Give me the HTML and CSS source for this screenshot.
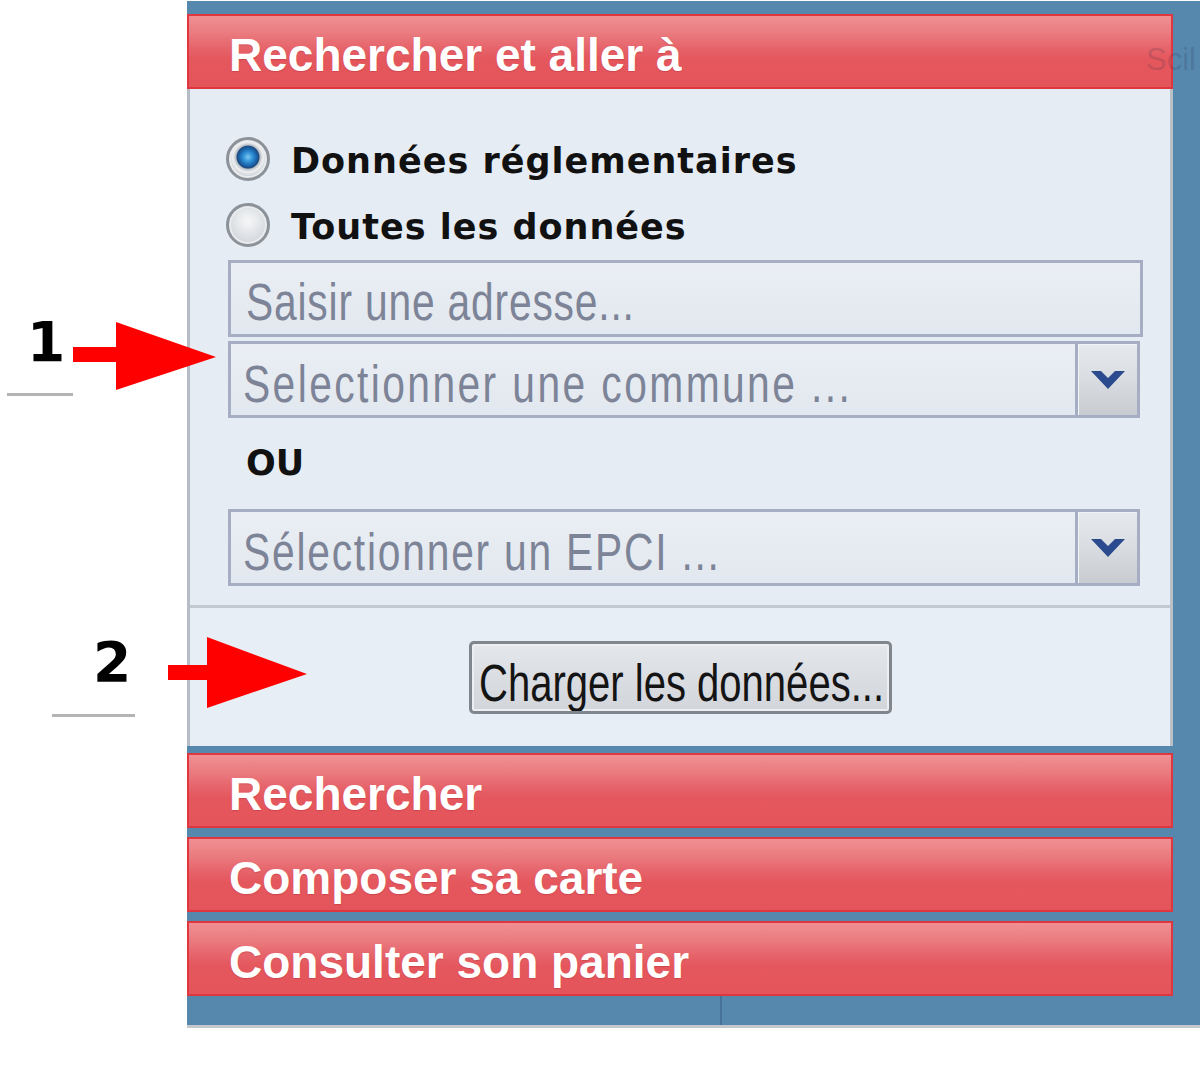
FILE: index.html
```html
<!DOCTYPE html>
<html lang="fr">
<head>
  <meta charset="UTF-8">
  <meta name="viewport" content="width=device-width, initial-scale=1.0">
  <title>Rechercher et aller à</title>
  <link rel="stylesheet" href="styles.css">
</head>
<body>
  <div class="page">
    <div class="frame">
      <div class="bar">Rechercher et aller à</div>

      <div class="panel">
        <div class="fieldset">
          <label class="radio-row">
            <span class="radio checked"></span>
            <span class="radio-label">Données réglementaires</span>
          </label>
          <label class="radio-row">
            <span class="radio"></span>
            <span class="radio-label">Toutes les données</span>
          </label>

          <div class="field">
            <span class="hint">Saisir une adresse...</span>
          </div>

          <div class="combo">
            <div class="combo-text"><span class="hint wide">Selectionner une commune ...</span></div>
            <span class="combo-btn">
              <svg width="34" height="22" viewBox="0 0 34 22"><path d="M0 2H10L17 9L24 2H34L17 20Z" fill="#2c4b8e"/></svg>
            </span>
          </div>

          <div class="or">OU</div>

          <div class="combo">
            <div class="combo-text"><span class="hint spaced">Sélectionner un EPCI ...</span></div>
            <span class="combo-btn">
              <svg width="34" height="22" viewBox="0 0 34 22"><path d="M0 2H10L17 9L24 2H34L17 20Z" fill="#2c4b8e"/></svg>
            </span>
          </div>
        </div>

        <div class="actions">
          <button class="load-btn" type="button"><span class="btn-text">Charger les données...</span></button>
        </div>
      </div>

      <div class="bars">
        <div class="bar">Rechercher</div>
        <div class="bar">Composer sa carte</div>
        <div class="bar">Consulter son panier</div>
      </div>

      <div class="frame-foot"><div class="foot-split"></div></div>
    </div>

    <span class="ghost">Scil</span>

    <div class="note note-1">1</div>
    <div class="note-rule rule-1"></div>
    <div class="note note-2">2</div>
    <div class="note-rule rule-2"></div>

    <svg class="arrows" width="320" height="720" viewBox="0 0 320 720">
      <path d="M73 347H116V322L216 357L116 390V362H73Z" fill="#ff0000"/>
      <path d="M168 665H207V637L307 674L207 708V680H168Z" fill="#ff0000"/>
    </svg>
  </div>
</body>
</html>
```

FILE: styles.css
```css
body {
  margin: 0;
  background: #fff;
  font-family: 'Liberation Sans', Arial, sans-serif;
}

.page {
  position: relative;
  width: 1200px;
  height: 1083px;
  overflow: hidden;
}

.frame {
  margin-left: 187px;
  width: 1013px;
  box-sizing: border-box;
  padding: 13px 27px 0 0;
  background: #5687ad;
  border-top: 1px solid #fff;
  border-bottom: 3px solid #c4c8cc;
}

.bar {
  height: 75px;
  box-sizing: border-box;
  border: 2px solid #e0373f;
  padding: 7px 0 0 40px;
  line-height: 64px;
  background: linear-gradient(to bottom, #ef9094 0%, #ea7b7f 24%, #e6636a 46%, #e4575d 60%, #e4555b 100%);
  color: #fff;
  font-size: 46px;
  font-weight: bold;
  white-space: nowrap;
  text-shadow: 0 1px 1px rgba(170, 40, 50, 0.35);
}

.panel {
  height: 657px;
  box-sizing: border-box;
  background: #e6ecf3;
  border-left: 3px solid #b5bcc5;
  border-right: 3px solid #b9c0c8;
}

.fieldset {
  height: 519px;
  box-sizing: border-box;
  padding: 48px 0 19px 38px;
  border-bottom: 3px solid #c3c9d1;
}

.radio-row {
  display: flex;
  align-items: center;
  height: 44px;
  margin-left: -2px;
  margin-bottom: 22px;
}

.radio-row + .radio-row {
  margin-bottom: 13px;
}

.radio {
  width: 44px;
  height: 44px;
  box-sizing: border-box;
  border-radius: 50%;
  border: 3px solid #8c9299;
  background: radial-gradient(circle at 50% 40%, #f6f7f8 0%, #e1e4e7 45%, #c6cacf 100%);
  box-shadow: inset 0 0 0 2px #e9ebed;
  flex: none;
}

.radio.checked {
  background: radial-gradient(circle at 50% 45%, #7cc8f2 0, #2f8fd4 5px, #1d6cb3 8px, #1b4a80 11px, #b8bec5 12px, #eef0f2 15px, #d4d7db 18px, #c2c6cb 100%);
}

.radio-label {
  margin-left: 21px;
  padding-top: 4px;
  font-family: 'DejaVu Sans', Verdana, sans-serif;
  font-weight: bold;
  font-size: 35px;
  letter-spacing: 1px;
  color: #111;
  white-space: nowrap;
}

.field,
.combo {
  height: 77px;
  box-sizing: border-box;
  border: 3px solid #a6aec3;
  background: linear-gradient(to bottom, #ebeff4 0%, #e7ecf2 40%, #e2e8ef 100%);
  overflow: hidden;
}

.field {
  width: 915px;
  padding: 11px 0 0 15px;
}

.combo {
  display: flex;
  width: 912px;
  margin-top: 4px;
}

.combo-text {
  flex: 1;
  min-width: 0;
  overflow: hidden;
  padding: 12px 0 0 12px;
}

.hint {
  display: inline-block;
  font-size: 51px;
  line-height: 57px;
  letter-spacing: 1px;
  color: #7d8497;
  white-space: nowrap;
  transform: scaleX(0.8);
  transform-origin: left center;
}

.hint.spaced {
  letter-spacing: 2.2px;
}

.hint.wide {
  letter-spacing: 3px;
}

.combo-btn {
  width: 62px;
  flex: none;
  box-sizing: border-box;
  border-left: 3px solid #a6aec3;
  background: linear-gradient(to bottom, #e6e9ed 0%, #d9dde1 50%, #c8ccd1 100%);
  box-shadow: inset 1px 1px 0 #f2f4f6;
  display: flex;
  align-items: center;
  justify-content: center;
}

.or {
  height: 91px;
  line-height: 91px;
  padding-left: 18px;
  font-family: 'DejaVu Sans', Verdana, sans-serif;
  font-weight: bold;
  font-size: 35px;
  color: #111;
}

.or + .combo {
  margin-top: 0;
}

.actions {
  display: flex;
  justify-content: center;
  padding-top: 33px;
  background: #e8eef5;
  height: 135px;
  box-sizing: border-box;
}

.load-btn {
  width: 423px;
  height: 73px;
  box-sizing: border-box;
  border: 3px solid #80868d;
  border-radius: 5px;
  background: linear-gradient(to bottom, #e4e7eb 0%, #dadde2 50%, #d2d6db 100%);
  box-shadow: inset 0 0 0 2px #eceef1;
  padding: 12px 0 0 7px;
  text-align: left;
  overflow: hidden;
  white-space: nowrap;
}

.btn-text {
  display: inline-block;
  font-family: 'Liberation Sans', Arial, sans-serif;
  font-size: 51px;
  line-height: 48px;
  color: #141414;
  transform: scaleX(0.785);
  transform-origin: left center;
}

.bars {
  display: flex;
  flex-direction: column;
  gap: 9px;
  padding-top: 7px;
}

.frame-foot {
  height: 29px;
}

.foot-split {
  width: 533px;
  height: 100%;
  border-right: 2px solid #46729a;
}

.ghost {
  position: absolute;
  left: 1146px;
  top: 42px;
  font-size: 31px;
  color: rgba(30, 40, 70, 0.18);
}

.note {
  position: absolute;
  font-family: 'DejaVu Sans', Verdana, sans-serif;
  font-weight: bold;
  font-size: 55px;
  line-height: 55px;
  color: #000;
}

.note-1 {
  left: 27px;
  top: 315px;
}

.note-2 {
  left: 93px;
  top: 635px;
}

.note-rule {
  position: absolute;
  height: 3px;
  background: #b4b4b4;
}

.rule-1 {
  left: 7px;
  top: 393px;
  width: 66px;
}

.rule-2 {
  left: 52px;
  top: 714px;
  width: 83px;
}

.arrows {
  position: absolute;
  left: 0;
  top: 0;
}
```
